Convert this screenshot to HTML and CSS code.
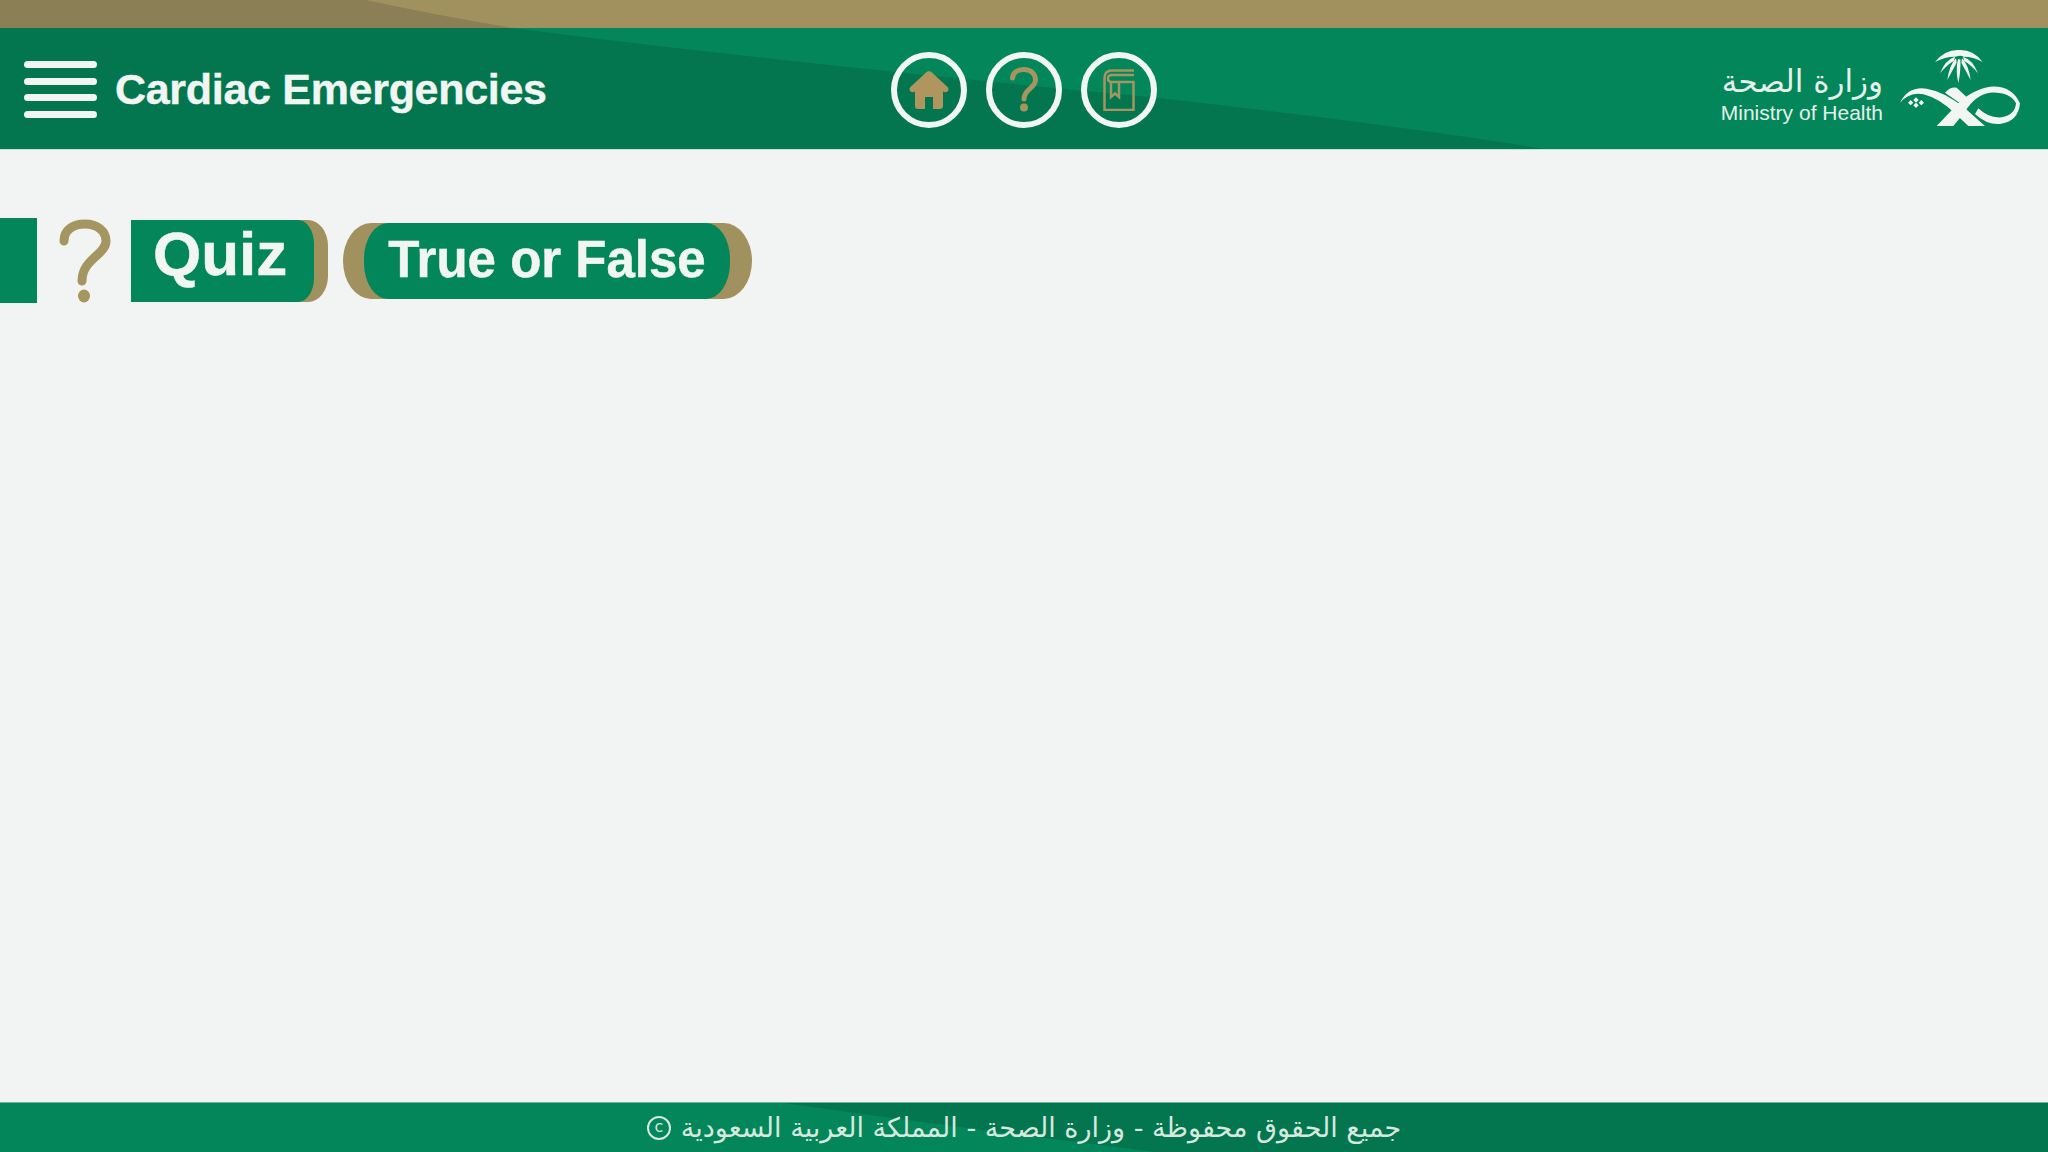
FILE: index.html
```html
<!DOCTYPE html>
<html lang="en">
<head>
  <meta charset="UTF-8">
  <title>Cardiac Emergencies</title>
  <link rel="stylesheet" href="styles.css">
</head>
<body>

  <div class="top-strip">
    <svg class="swoosh" viewBox="0 0 2048 28" preserveAspectRatio="none"><path d="M0 0H366Q440 16 513 28H0Z" fill="#8a7f55"/></svg>
  </div>

  <header class="header">
    <svg class="swoosh" viewBox="0 0 2048 122" preserveAspectRatio="none"><path d="M0 0H513Q620 14 700 23Q900 46 1154 70Q1400 98 1544 122H0Z" fill="#037650"/></svg>

    <div class="header-left">
      <div class="menu-icon"><span></span><span></span><span></span><span></span></div>
      <div class="course-title">Cardiac Emergencies</div>
    </div>

    <div class="header-icons">
      <div class="round-btn">
        <svg viewBox="0 0 40 40" width="40" height="40"><path d="M20 1Q21.500 1 23 2.500L38.500 17Q40.500 19.500 38.500 21.500Q36.500 23 34 21.500V36Q34 39 31 39H24V27H16V39H9Q6 39 6 36V21.500Q3.500 23 1.500 21.500Q-0.500 19.500 1.500 17L17 2.500Q18.500 1 20 1Z" fill="#b0955f"/></svg>
      </div>
      <div class="round-btn">
        <svg viewBox="0 0 30 46" width="30" height="46"><path d="M3.500 11C4 5 9 2.500 15 2.500C22 2.500 26.500 7 26.500 13C26.500 21 15 22 15 32" fill="none" stroke="#a59560" stroke-width="5" stroke-linecap="round"/><circle cx="15" cy="40.500" r="4" fill="#a59560"/></svg>
      </div>
      <div class="round-btn">
        <svg viewBox="0 0 32 42" width="32" height="42" fill="none" stroke="#a59560" stroke-width="2.500"><path d="M31 1.500H9Q1.500 1.500 1.500 9V41H30.500V13H9Q5 13 5 9.500Q5 6 9 6H31"/><path d="M8 13V28L12 24.500L16 28V13"/></svg>
      </div>
    </div>

    <div class="moh-logo">
      <div class="moh-text">
        <div class="moh-ar">وزارة الصحة</div>
        <div class="moh-en">Ministry of Health</div>
      </div>
      <svg class="moh-mark" viewBox="0 0 420 270" width="140" height="90">
        <g fill="#f1f6f3">
          <path d="M207 30Q165 28 135 66Q165 50 195 50Q215 45 220 50Q250 50 278 66Q250 28 207 30Z"/>
          <path d="M195 50Q165 60 150 100Q170 75 192 62Z"/>
          <path d="M198 55Q178 75 172 120Q188 90 200 68Z"/>
          <path d="M204 58Q196 90 205 130Q213 90 211 58Z"/>
          <path d="M216 55Q236 75 242 120Q226 90 214 68Z"/>
          <path d="M219 50Q249 60 264 100Q244 75 222 62Z"/>
          <path d="M30 188Q55 138 110 146Q165 155 225 205L285 258H235L200 225Q150 175 100 163Q60 155 30 188Z"/>
          <path d="M140 258L195 200Q240 150 300 140Q365 135 390 190Q385 245 330 252Q290 255 255 222L265 205Q295 235 335 232Q375 225 378 190Q360 155 300 158Q255 165 225 215L190 258Z"/>
          <path d="M165 158Q180 140 200 143L245 185L225 200Z"/>
          <path d="M62 180L70 188L62 196L54 188Z"/><path d="M78 172L86 180L78 188L70 180Z"/><path d="M78 188L86 196L78 204L70 196Z"/><path d="M94 180L102 188L94 196L86 188Z"/>
        </g>
      </svg>
    </div>
  </header>

  <main class="content">
    <div class="quiz-row">
      <div class="side-tab"></div>
      <svg class="quiz-mark" viewBox="0 0 54 84" width="54" height="84"><path d="M7 22C7 11 16 5 28 5C40 5 49 12 49 22C49 36 25 40 25 62" fill="none" stroke="#a59560" stroke-width="9" stroke-linecap="round"/><ellipse cx="27" cy="77" rx="6" ry="6.500" fill="#a59560"/></svg>
      <div class="quiz-label"><div class="quiz-label-in">Quiz</div></div>
      <div class="type-label"><div class="type-label-in">True or False</div></div>
    </div>
  </main>

  <footer class="footer">
    <svg class="swoosh" viewBox="0 0 2048 50" preserveAspectRatio="none"><path d="M784 0H2048V50H1155Q950 24 784 0Z" fill="#037650"/></svg>
    <div class="footer-text">
      <span class="copy-mark">c</span>
      <span dir="rtl">جميع الحقوق محفوظة - وزارة الصحة - المملكة العربية السعودية</span>
    </div>
  </footer>

</body>
</html>
```

FILE: styles.css
```css
* {
  box-sizing: border-box;
}
body {
  margin: 0;
  height: 1152px;
  display: flex;
  flex-direction: column;
  font-family: "Liberation Sans", Arial, sans-serif;
  background-color: #f2f4f3;
  overflow: hidden;
}
.swoosh {
  position: absolute;
  left: 0;
  top: 0;
  width: 100%;
  height: 100%;
}
.top-strip {
  position: relative;
  height: 28px;
  background-color: #a1915f;
}
.header {
  position: relative;
  height: 122px;
  padding-top: 2px;
  display: grid;
  grid-template-columns: 1fr auto 1fr;
  align-items: center;
  background-color: #02865a;
  border-bottom: 1px solid #bfe3d3;
}
.header-left {
  position: relative;
  display: flex;
  align-items: center;
  gap: 18px;
  padding-left: 24px;
}
.menu-icon {
  display: flex;
  flex-direction: column;
  gap: 9.500px;
  width: 73px;
}
.menu-icon span {
  height: 7px;
  background-color: #f1f6f3;
  border-radius: 4px;
}
.course-title {
  color: #f1f6f3;
  font-size: 43px;
  font-weight: bold;
  letter-spacing: -0.3px;
  -webkit-text-stroke: 0.4px #f1f6f3;
}
.header-icons {
  position: relative;
  display: flex;
  gap: 19px;
}
.round-btn {
  width: 76px;
  height: 76px;
  display: flex;
  align-items: center;
  justify-content: center;
  border: 6px solid #f1f6f3;
  border-radius: 50%;
}
.moh-logo {
  position: relative;
  display: flex;
  justify-content: flex-end;
  align-items: center;
  gap: 7px;
  padding-right: 18px;
}
.moh-mark {
  margin-bottom: 9px;
}
.moh-text {
  color: #e6f0ea;
  text-align: right;
  margin-top: 6px;
}
.moh-ar {
  font-family: "DejaVu Sans", sans-serif;
  font-size: 31px;
  line-height: 40px;
  font-weight: normal;
}
.moh-en {
  font-size: 21px;
  line-height: 24px;
}
.content {
  flex: 1;
  padding-top: 68px;
}
.quiz-row {
  display: flex;
  align-items: center;
}
.side-tab {
  width: 37px;
  height: 85px;
  background-color: #02865a;
}
.quiz-mark {
  margin-left: 20px;
}
.quiz-label {
  margin-left: 20px;
  width: 197px;
  height: 82px;
  background-color: #a1915f;
  border-radius: 0 20px 20px 0 / 0 26px 26px 0;
}
.quiz-label-in {
  width: 183px;
  height: 82px;
  padding-left: 22px;
  background-color: #02865a;
  border-radius: 0 16px 16px 0 / 0 24px 24px 0;
  color: #f1f6f3;
  font-size: 62px;
  font-weight: bold;
  line-height: 68px;
  -webkit-text-stroke: 0.5px #f1f6f3;
}
.type-label {
  margin-left: 15px;
  width: 409px;
  height: 76px;
  padding-left: 21px;
  background-color: #a1915f;
  border-radius: 28px / 38px;
}
.type-label-in {
  width: 366px;
  height: 76px;
  background-color: #02865a;
  border-radius: 24px / 36px;
  color: #f1f6f3;
  font-size: 51px;
  font-weight: bold;
  line-height: 74px;
  text-align: center;
  -webkit-text-stroke: 0.5px #f1f6f3;
}
.footer {
  position: relative;
  height: 50px;
  background-color: #02865a;
  border-top: 1px solid #6fb59a;
  display: flex;
  align-items: center;
  justify-content: center;
}
.footer-text {
  position: relative;
  display: flex;
  align-items: center;
  gap: 10px;
  color: #d6e8df;
  font-family: "DejaVu Sans", sans-serif;
  font-size: 27px;
}
.copy-mark {
  width: 24px;
  height: 24px;
  border: 2px solid #d6e8df;
  border-radius: 50%;
  font-size: 16px;
  line-height: 18px;
  text-align: center;
}
```
